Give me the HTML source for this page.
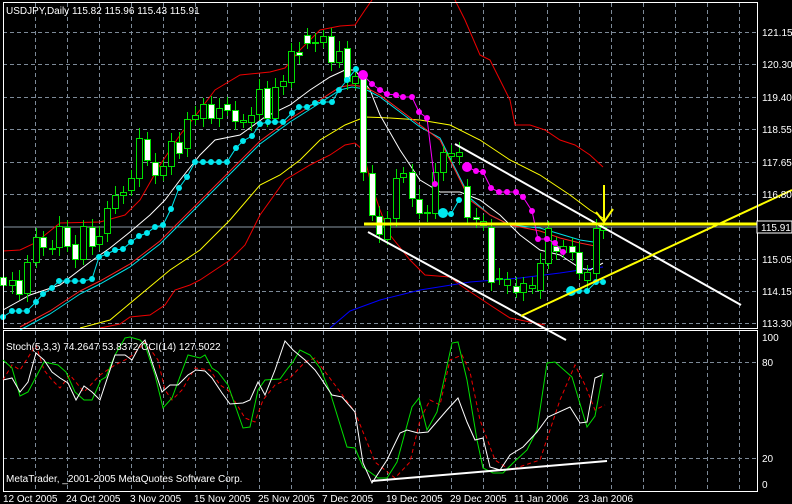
<!DOCTYPE html>
<html><head><meta charset="utf-8"><style>
html,body{margin:0;padding:0;background:#000;width:792px;height:504px;overflow:hidden}
svg{display:block}
text{font-family:"Liberation Sans",sans-serif;font-size:10px;fill:#fff}
</style></head><body>
<svg id="s" width="792" height="504" xmlns="http://www.w3.org/2000/svg">
<rect width="792" height="504" fill="#000"/>
<g id="grid" stroke="#7d8a98" stroke-width="1" stroke-dasharray="4,3" fill="none"></g>
<line x1="3" y1="227" x2="757" y2="227" stroke="#8a97a4" stroke-width="1"/>
<g fill="none" stroke-width="1">
<polyline stroke="#e00" points="3,251 20,250 35,243 60,223 100,222 125,215 140,200 160,165 180,135 200,110 215,90 240,75 270,72 285,68 300,50 320,30 340,26 355,25 365,10 372,0"/>
<polyline stroke="#e00" points="455,0 465,20 480,55 490,60 500,80 510,100 515,125 530,125 545,130 560,140 575,145 590,155 603,167"/>
<polyline stroke="#e00" points="100,328 120,324 130,317 150,315 165,305 175,290 190,285 200,280 230,260 245,245 260,215 285,180 310,165 330,155 345,145 355,143 363,150 370,180 380,210 390,235 410,260 425,275 450,277 460,285 475,295 490,305 510,318 530,322 545,325"/>
<polyline stroke="#ffff00" points="80,328 110,320 140,295 170,270 200,250 230,220 260,185 280,175 300,160 320,140 345,125 365,117 390,118 420,120 450,125 480,140 510,160 540,175 570,195 590,210 603,218"/>
<polyline stroke="#0000ff" points="330,328 350,311 380,300 420,290 470,282 520,278 560,273 580,270 603,267"/>
<polyline stroke="#fff" points="3,310 30,295 60,285 90,262 110,248 130,232 150,215 165,200 180,180 200,155 215,140 240,135 265,117 290,105 310,90 330,77 345,70 355,70 370,90 380,115 400,150 420,180 440,192 460,192 480,200 500,215 520,235 540,250 560,255 580,268 590,270 603,263"/>
<polyline stroke="#00e0e8" points="20,330 50,314 80,294 100,284 130,267 160,244 200,204 230,174 260,144 290,122 320,103 340,90 352,87 365,89 380,97 400,112 420,127 440,138 455,168 470,198 490,215 510,225 540,228 560,234 580,240 600,243"/>
<polyline stroke="#ff2020" points="20,327 50,311 80,291 100,281 130,264 160,241 200,201 230,171 260,141 290,119 320,100 340,87 352,85 365,87 380,95 400,110 420,125 440,140 455,170 470,200 490,215 510,225 540,231 560,238 580,243 600,247"/>
</g>
<g id="candles"></g>
<g id="dots"></g>
<line x1="455" y1="144" x2="741" y2="305" stroke="#fff" stroke-width="2"/>
<line x1="368" y1="232" x2="566" y2="340" stroke="#fff" stroke-width="2"/>
<line x1="364" y1="224" x2="757" y2="224" stroke="#ffff00" stroke-width="3"/>
<line x1="521" y1="316" x2="792" y2="190" stroke="#ffff00" stroke-width="2"/>
<polyline points="604,185 604,222" stroke="#ffff00" stroke-width="2" fill="none"/>
<polyline points="596,212 604,222 613,209" stroke="#ffff00" stroke-width="2" fill="none"/>
<rect x="3.5" y="2.5" width="754" height="326" fill="none" stroke="#fff"/>
<rect x="3.5" y="330.5" width="754" height="161" fill="none" stroke="#fff"/>
<text x="6" y="14">USDJPY,Daily  115.82 115.96 115.43 115.91</text>
<g id="axis"></g>
<rect x="757" y="221" width="35" height="12" fill="#000" stroke="#fff"/>
<text x="761" y="231">115.91</text>
<g fill="none" stroke-width="1">
<polyline stroke="#e00" stroke-dasharray="4,3" points="3,380 12,365 20,370 36,345 44,370 52,380 60,388 70,375 84,392 100,375 115,365 125,360 133,355 145,342 158,360 165,390 172,400 182,390 195,368 210,370 220,385 228,390 245,418 255,422 263,400 275,385 290,378 305,362 315,358 320,365 335,385 355,412 375,462 395,478 410,462 420,420 430,400 440,405 450,360 462,355 470,372 480,420 495,460 510,470 540,460 560,400 575,365 585,385 595,410 605,405"/>
<polyline stroke="#00e000" points="3,360 12,368 20,396 28,392 44,362 58,365 66,372 75,392 84,400 92,400 101,380 106,377 115,355 125,338 130,337 140,340 145,345 155,375 163,408 172,398 188,355 200,358 205,355 212,368 218,372 228,385 243,428 250,427 258,390 265,380 280,379 288,368 293,362 300,350 310,355 320,368 330,392 347,447 355,448 363,467 378,478 387,478 397,462 412,407 419,398 427,430 437,412 452,343 458,342 467,380 477,440 483,468 493,473 503,473 513,463 527,450 537,430 547,363 555,362 572,377 587,427 595,416 603,373"/>
<polyline stroke="#fff" points="3,380 12,378 20,392 28,382 36,353 44,360 52,372 60,378 68,383 76,400 84,386 92,392 100,400 115,355 125,355 132,360 140,345 145,340 153,365 162,392 170,385 178,385 188,375 196,370 205,371 212,378 222,393 230,404 243,403 250,400 258,382 265,395 275,370 285,341 293,350 305,360 315,370 320,377 332,395 342,397 355,412 363,463 372,483 387,460 400,433 407,430 418,433 428,432 447,410 458,398 467,422 475,440 483,438 490,467 500,470 510,455 523,447 537,432 548,417 570,407 580,423 587,422 595,378 602,375"/>
</g>
<line x1="372" y1="481" x2="607" y2="461" stroke="#fff" stroke-width="2"/>
<text x="6" y="350">Stoch(5,3,3) 74.2647 53.8372  CCI(14) 127.5022</text>
<text x="6" y="482">MetaTrader, _2001-2005 MetaQuotes Software Corp.</text>
<text x="762" y="341">100</text>
<text x="762" y="366">80</text>
<text x="762" y="462">20</text>
<text x="762" y="488">0</text>
</svg>
<script>
var NS="http://www.w3.org/2000/svg";
function el(p,t,a){var e=document.createElementNS(NS,t);for(var k in a)e.setAttribute(k,a[k]);p.appendChild(e);return e;}
var grid=document.getElementById('grid');
for(var x=35;x<=740;x+=32){el(grid,'line',{x1:x+.5,y1:3,x2:x+.5,y2:328});el(grid,'line',{x1:x+.5,y1:331,x2:x+.5,y2:491});}
var py=[[32,"121.15"],[64,"120.30"],[97,"119.40"],[129,"118.55"],[162,"117.65"],[194,"116.80"],[259,"115.05"],[291,"114.15"],[323,"113.30"]];
var ax=document.getElementById('axis');
py.forEach(function(p){el(grid,'line',{x1:3,y1:p[0]+.5,x2:757,y2:p[0]+.5});var t=el(ax,'text',{x:762,y:p[0]+4});t.textContent=p[1];});
el(grid,'line',{x1:3,y1:362.5,x2:757,y2:362.5});el(grid,'line',{x1:3,y1:458.5,x2:757,y2:458.5});
var dl=[[3,"12 Oct 2005"],[66,"24 Oct 2005"],[130,"3 Nov 2005"],[194,"15 Nov 2005"],[258,"25 Nov 2005"],[322,"7 Dec 2005"],[386,"19 Dec 2005"],[450,"29 Dec 2005"],[514,"11 Jan 2006"],[578,"23 Jan 2006"]];
dl.forEach(function(d){var t=el(ax,'text',{x:d[0],y:502});t.textContent=d[1];});
var C=[[3,277,285,'w'],[12,280,285,'u'],[19,280,294,'w'],[27,262,293,'u'],[36,237,262,'u'],[43,237,247,'w'],[52,248,249,'u'],[59,226,247,'u'],[67,227,246,'w'],[75,244,259,'w'],[83,226,259,'u'],[92,227,246,'w'],[99,236,244,'u'],[107,208,233,'u'],[115,195,208,'u'],[123,192,195,'u'],[131,178,190,'u'],[139,138,178,'u'],[147,139,160,'w'],[155,162,175,'w'],[163,166,175,'u'],[171,141,166,'u'],[179,142,153,'w'],[187,119,148,'u'],[195,115,119,'u'],[203,104,118,'u'],[211,104,118,'w'],[219,108,118,'u'],[227,104,110,'w'],[235,110,121,'w'],[243,120,122,'u'],[251,115,122,'u'],[259,89,114,'u'],[267,88,118,'w'],[275,87,118,'u'],[283,81,86,'u'],[291,51,82,'u'],[299,52,55,'w'],[307,35,43,'w'],[315,42,43,'u'],[323,36,42,'u'],[331,36,62,'w'],[339,51,62,'u'],[347,48,81,'w'],[355,76,83,'u'],[363,77,172,'w'],[372,173,215,'w'],[379,216,234,'w'],[387,218,239,'u'],[396,178,218,'u'],[403,173,177,'u'],[412,172,198,'w'],[419,199,213,'w'],[427,212,213,'u'],[435,172,213,'u'],[443,152,172,'u'],[451,153,156,'u'],[459,152,156,'u'],[467,186,217,'w'],[476,217,219,'w'],[483,221,225,'u'],[491,227,282,'w'],[499,278,279,'u'],[507,279,285,'u'],[516,286,292,'w'],[523,283,292,'u'],[532,285,288,'u'],[540,263,290,'u'],[548,228,263,'u'],[556,246,251,'w'],[563,246,252,'u'],[572,246,252,'w'],[579,252,273,'w'],[587,272,280,'u'],[596,228,273,'u'],[603,227,230,'u']];
var cg=document.getElementById('candles');
C.forEach(function(c,i){var h=c[1]-6-(i*7%5),l=c[2]+6+(i*3%6);
el(cg,'line',{x1:c[0]+.5,y1:h,x2:c[0]+.5,y2:l,stroke:'#00e000','stroke-width':1});
var hh=Math.max(1,c[2]-c[1]);
el(cg,'rect',{x:c[0]-2.5,y:c[1]+.5,width:6,height:hh,fill:c[3]=='w'?'#fff':'#000',stroke:'#00e000','stroke-width':1});});
var dg=document.getElementById('dots');
var cy=[[3,317],[12,311],[19,311],[27,311],[36,302],[43,294],[52,288],[59,281],[67,281],[75,281],[83,281],[92,279],[99,257],[107,254],[115,250],[123,249],[131,242],[139,236],[147,233],[155,227],[163,225],[171,209],[179,188],[187,177],[195,162],[203,162],[211,162],[219,162],[227,162],[236,148],[243,141],[252,136],[260,124],[268,122],[275,122],[283,122],[292,113],[299,107],[307,107],[315,103],[323,102],[332,102],[339,90],[347,80],[356,69]];
el(dg,'polyline',{points:cy.map(function(p){return p.join(',')}).join(' '),fill:'none',stroke:'#00e8f0'});
cy.forEach(function(p){el(dg,'circle',{cx:p[0],cy:p[1],r:3,fill:'#00e8f0'});});
var c2=[[443,213],[451,214],[459,200]];el(dg,'polyline',{points:c2.join(' '),fill:'none',stroke:'#00e8f0'});
c2.forEach(function(p,i){el(dg,'circle',{cx:p[0],cy:p[1],r:i==0?5:3,fill:'#00e8f0'});});
var c3=[[571,291],[579,291],[587,291],[596,282],[603,282]];el(dg,'polyline',{points:c3.join(' '),fill:'none',stroke:'#00e8f0'});
c3.forEach(function(p,i){el(dg,'circle',{cx:p[0],cy:p[1],r:i==0?5:3,fill:'#00e8f0'});});
var m1=[[363,75],[372,84],[380,90],[387,94],[396,95],[403,97],[412,97],[419,112],[427,118],[435,184]];
el(dg,'polyline',{points:m1.join(' '),fill:'none',stroke:'#ff00ff'});
m1.forEach(function(p,i){el(dg,'circle',{cx:p[0],cy:p[1],r:i==0?5:3,fill:'#ff00ff'});});
var m2=[[467,167],[476,171],[483,172],[491,188],[499,192],[507,192],[516,192],[523,197],[532,211],[538,239],[547,239],[555,243],[563,252]];
el(dg,'polyline',{points:m2.join(' '),fill:'none',stroke:'#ff00ff'});
m2.forEach(function(p,i){el(dg,'circle',{cx:p[0],cy:p[1],r:i==0?5:3,fill:'#ff00ff'});});
</script>
</body></html>
